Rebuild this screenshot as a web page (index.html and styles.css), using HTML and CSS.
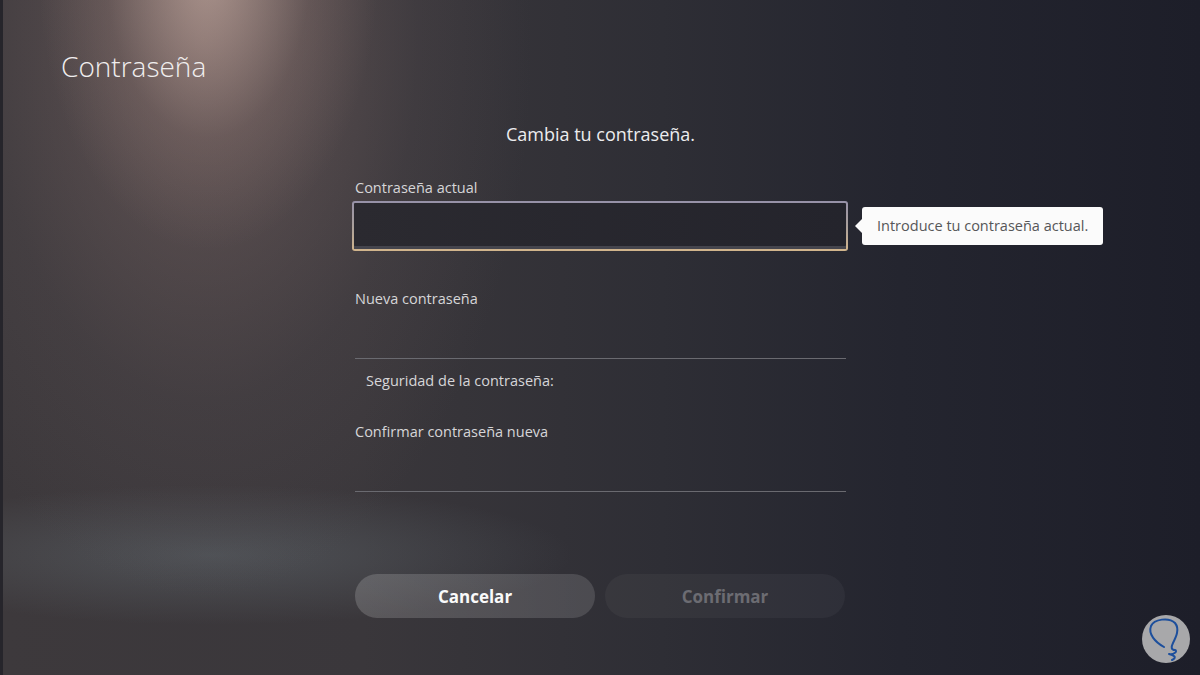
FILE: index.html
```html
<!DOCTYPE html>
<html lang="es">
<head>
    <meta charset="UTF-8">
    <meta name="viewport" content="width=device-width, initial-scale=1.0">
    <title>Contraseña</title>
    <link rel="stylesheet" href="styles.css">
</head>
<body>
    <div class="screen">
        <h1 class="page-title">Contraseña</h1>

        <main class="form">
            <p class="intro">Cambia tu contraseña.</p>

            <div class="field">
                <label class="field-label">Contraseña actual</label>
                <div class="input focused">
                    <div class="tip">Introduce tu contraseña actual.</div>
                </div>
            </div>

            <div class="field">
                <label class="field-label spaced">Nueva contraseña</label>
                <div class="input plain"></div>
            </div>

            <p class="strength">Seguridad de la contraseña:</p>

            <div class="field">
                <label class="field-label">Confirmar contraseña nueva</label>
                <div class="input plain"></div>
            </div>

            <div class="actions">
                <button class="btn primary">Cancelar</button>
                <button class="btn" disabled>Confirmar</button>
            </div>
        </main>

        <div class="watermark">
            <svg width="48" height="48" viewBox="0 0 48 48">
                <circle cx="24" cy="24" r="24" fill="#a8a8aa"/>
                <path d="M22 32 C13 27 6 19 9 11 C12 4 27 2 33 8 C38 14 34 22 31 28 C29 32 29 35 33 35 C36 36 32 40 27 39 C31 40 36 42 30 45"
                      fill="none" stroke="#1d4f9c" stroke-width="2" stroke-linecap="round" stroke-linejoin="round"/>
            </svg>
        </div>
    </div>
</body>
</html>
```

FILE: styles.css
```css
:root {
    --text-main: #e6e6e8;
    --text-label: #d6d6d8;
    --line: #6a6a70;
}

* {
    box-sizing: border-box;
}

body {
    margin: 0;
    font-family: 'Open Sans', 'Noto Sans', sans-serif;
    color: var(--text-main);
    background: #1e1f29;
}

.screen {
    position: relative;
    width: 1200px;
    height: 675px;
    overflow: hidden;
    border-left: 3px solid #26252b;
    background:
        radial-gradient(ellipse 170px 280px at 205px -30px, rgba(220, 190, 178, 0.6), rgba(170, 140, 132, 0.2) 60%, transparent 100%),
        radial-gradient(ellipse 330px 560px at 200px 40px, rgba(150, 122, 118, 0.45), rgba(110, 95, 98, 0.15) 65%, transparent 100%),
        radial-gradient(ellipse 360px 70px at 210px 555px, rgba(120, 135, 142, 0.32), transparent 100%),
        linear-gradient(to right, #3d393c 0%, #3a373b 30%, #2e2e35 55%, #24252f 75%, #1d1e29 100%);
}

.page-title {
    margin: 49px 0 0 58px;
    font-size: 28px;
    line-height: 34px;
    font-weight: 300;
    color: #f0eeee;
}

.form {
    width: 491px;
    margin-left: 352px;
}

.intro {
    margin: 39px 0 0;
    text-align: center;
    font-size: 18px;
    line-height: 24px;
    color: #ececee;
}

.field-label {
    display: block;
    margin-top: 32px;
    font-size: 14.5px;
    line-height: 20px;
    color: var(--text-label);
}

.field-label.spaced {
    margin-top: 38px;
}

.input {
    position: relative;
}

.input.focused {
    width: 496px;
    height: 50px;
    margin: 3px 0 0 -3px;
    border: 2px solid transparent;
    border-radius: 3px;
    background:
        linear-gradient(to right, #2b2a30, #24242c) padding-box,
        linear-gradient(to bottom, #9691a8, #aaa09c 50%, #d2b58c) border-box;
    box-shadow: inset 0 -3px 0 #45454d;
}

.input.plain {
    height: 50px;
    border-bottom: 1px solid var(--line);
}

.tip {
    position: absolute;
    left: 508px;
    top: 4px;
    padding: 0 15px;
    height: 38px;
    line-height: 38px;
    background: #fbfbfb;
    border-radius: 3px;
    color: #565658;
    font-size: 14.5px;
    white-space: nowrap;
}

.tip::before {
    content: "";
    position: absolute;
    left: -7px;
    top: 12px;
    border-top: 7px solid transparent;
    border-bottom: 7px solid transparent;
    border-right: 7px solid #fbfbfb;
}

.strength {
    margin: 12px 0 0;
    padding-left: 11px;
    font-size: 14.5px;
    line-height: 20px;
    color: var(--text-label);
}

.strength + .field .field-label {
    margin-top: 31px;
}

.actions {
    display: flex;
    gap: 10px;
    margin-top: 82px;
}

.btn {
    width: 240px;
    height: 44px;
    border: none;
    border-radius: 22px;
    font-family: inherit;
    font-size: 17px;
    font-weight: 700;
    color: #6c6c72;
    background: rgba(255, 255, 255, 0.04);
}

.btn.primary {
    color: #fafafa;
    background: linear-gradient(to right, rgba(255, 255, 255, 0.17), rgba(255, 255, 255, 0.13));
}

.watermark {
    position: absolute;
    right: 10px;
    bottom: 12px;
    width: 48px;
    height: 48px;
}
```
